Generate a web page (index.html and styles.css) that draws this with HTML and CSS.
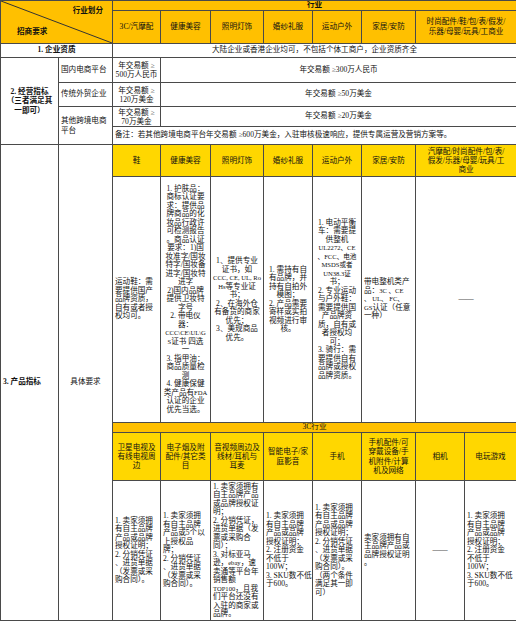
FILE: index.html
```html
<!DOCTYPE html>
<html lang="zh-CN">
<head>
<meta charset="utf-8">
<title>招商要求</title>
<link rel="stylesheet" href="styles.css">
</head>
<body>
<table class="sheet">
<colgroup>
<col class="w58"><col class="w54"><col class="w48"><col class="w50"><col class="w53"><col class="w49"><col class="w49"><col class="w54"><col class="w49"><col class="w52">
</colgroup>
<tbody>
<tr class="r10">
<td class="diag" colspan="2" rowspan="2">
<svg class="diag-line" viewBox="0 0 100 100" preserveAspectRatio="none"><line x1="0" y1="0" x2="100" y2="100"/></svg>
<div class="diag-text"><span class="diag-top">行业划分</span><span class="diag-bot">招商要求</span></div>
</td>
<td class="hbar b" colspan="8">行业</td>
</tr>
<tr class="r33">
<td class="hcat">3C/汽摩配</td>
<td class="hcat">健康美容</td>
<td class="hcat">照明灯饰</td>
<td class="hcat">婚纱礼服</td>
<td class="hcat">运动户外</td>
<td class="hcat">家居/安防</td>
<td class="hcat" colspan="2">时尚配件/鞋/包/表/假发/<br>乐器/母婴/玩具/工商业</td>
</tr>
<tr class="r14">
<td class="b" colspan="2">1. 企业资质</td>
<td colspan="8">大陆企业或香港企业均可，不包括个体工商户，企业资质齐全</td>
</tr>
<tr class="r25">
<td class="b lbl" rowspan="4">2. 经营指标<br>（三者满足其<br>一即可）</td>
<td class="l">国内电商平台</td>
<td class="amt">年交易额 ≥<br>500万人民币</td>
<td colspan="7">年交易额 ≥300万人民币</td>
</tr>
<tr class="r24">
<td class="l">传统外贸企业</td>
<td class="amt">年交易额 ≥<br>120万美金</td>
<td colspan="7">年交易额 ≥50万美金</td>
</tr>
<tr class="r20">
<td class="l lbl" rowspan="2">其他跨境电商<br>平台</td>
<td class="amt">年交易额 ≥<br>70万美金</td>
<td colspan="7">年交易额 ≥20万美金</td>
</tr>
<tr class="r18">
<td class="l" colspan="8">备注：若其他跨境电商平台年交易额 ≥600万美金，入驻审核极速响应，提供专属运营及营销方案等。</td>
</tr>
<tr class="r32">
<td class="b l" rowspan="5">3. 产品指标</td>
<td rowspan="5">具体要求</td>
<td class="pcat">鞋</td>
<td class="pcat">健康美容</td>
<td class="pcat">照明灯饰</td>
<td class="pcat">婚纱礼服</td>
<td class="pcat">运动户外</td>
<td class="pcat">家居/安防</td>
<td class="pcat" colspan="2">汽摩配/时尚配件/包/表/<br>假发/乐器/母婴/玩具/工<br>商业</td>
</tr>
<tr class="r246">
<td class="l">运动鞋：需<br>要提供国产<br>品牌资质，<br>自有或者授<br>权均可。</td>
<td>1. 护肤品：<br>商标认证要<br>求：提供品<br>牌商品的化<br>妆品行政许<br>可检测报告<br>。商品认证<br>要求：1)国<br>妆准字/国妆<br>特字/国妆备<br>进字/国妆特<br>进字<br>2)国内品牌<br>提供卫妆特<br>字号<br>2. 带电仪<br>器：<br><span class="sm">CCC\CE\UL\G</span><br><span class="sm">S</span>证书 四选<br>一<br>3. 指甲油：<br>商品质量检<br>测<br>4. 健康保健<br>类产品有<span class="sm">FDA</span><br>认证的企业<br>优先当选。</td>
<td>1、提供专业<br>证书，如<br><span class="sm">CCC, CE, UL, Ro</span><br><span class="sm">Hs</span>等专业证<br>书；<br>2、在海外仓<br>有备货的商家<br>优先；<br>3、美规商品<br>优先。</td>
<td>1. 需持有自<br>有品牌，并<br>持有自拍外<br>模图；<br>2. 产品需要<br>寄样或实拍<br>视频进行审<br>核。</td>
<td>1. 电动平衡<br>车：需要提<br>供整机<br><span class="sm">UL2272、CE</span><br><span class="sm">、FCC、电池</span><br><span class="sm">MSDS或者</span><br><span class="sm">UN38.3证</span><br>书；<br>2. 专业运动<br>与户外鞋：<br>需要提供国<br>产品牌资<br>质，自有或<br>者授权均<br>可；<br>3. 骑行：需<br>要提供自有<br>品牌或授权<br>品牌资质。</td>
<td class="l">带电整机类产<br>品：<span class="sm">3C 、CE</span><br><span class="sm">、 UL、 FC、</span><br><span class="sm">GS</span>认证（任意<br>一种）</td>
<td colspan="2">——</td>
</tr>
<tr class="r10">
<td class="hbar" colspan="8">3C行业</td>
</tr>
<tr class="r48">
<td class="pcat">卫星电视及<br>有线电视周<br>边</td>
<td class="pcat">电子烟及附<br>配件/其它类<br>目</td>
<td class="pcat">音视频周边及<br>线材/耳机与<br>耳麦</td>
<td class="pcat">智能电子/家<br>庭影音</td>
<td class="pcat">手机</td>
<td class="pcat">手机配件/可<br>穿戴设备/手<br>机附件/计算<br>机及网络</td>
<td class="pcat">相机</td>
<td class="pcat">电玩游戏</td>
</tr>
<tr class="r140">
<td class="l">1. 卖家须拥<br>有自主品牌<br>产品或品牌<br>授权证明；<br>2. 分销凭证<br>、进货单据<br>（发票或采<br>购合同）。</td>
<td class="l">1. 卖家须拥<br>有自主品牌<br>产品或5个以<br>上授权品<br>牌；<br>2. 分销凭证<br>、进货单据<br>（发票或采<br>购合同）。</td>
<td class="l">1. 卖家须拥有<br>自主品牌产品<br>或品牌授权证<br>明；<br>2. 分销凭证，<br>进货单据（发<br>票或采购合<br>同）；<br>3. 对标亚马<br>逊，<span class="sm">ebay</span>，速<br>卖通等平台年<br>销售额<br><span class="sm">TOP100</span>，且我<br>们平台还没有<br>入驻的商家或<br>品牌。</td>
<td class="l">1. 卖家须拥<br>有自主品牌<br>产品或品牌<br>授权证明；<br>2. 注册资金<br>不低于<br>100W；<br>3. SKU数不低<br>于600。</td>
<td class="l">1. 卖家须拥<br>有自主品牌<br>产品或品牌<br>授权证明；<br>2. 分销凭证<br>、进货单据<br>（发票或采<br>购合同）。<br>（两个条件<br>满足其一即<br>可）</td>
<td class="l">卖家须拥有自<br>主品牌产品或<br>品牌授权证明<br>。</td>
<td>——</td>
<td class="l">1. 卖家须拥<br>有自主品牌<br>产品或品牌<br>授权证明；<br>2. 注册资金<br>不低于<br>100W；<br>3. SKU数不低<br>于600。</td>
</tr>
</tbody>
</table>
</body>
</html>
```

FILE: styles.css
```css
html, body {
  margin: 0;
  padding: 0;
  background: #ffffff;
}

body {
  font-family: "Liberation Serif", "Noto Sans CJK SC", serif;
  font-size: 7.6px;
  line-height: 8.5px;
  color: #111111;
}

.sheet {
  border-collapse: collapse;
  table-layout: fixed;
  width: 516px;
}

.w58 { width: 58px; }
.w54 { width: 54px; }
.w48 { width: 48px; }
.w50 { width: 50px; }
.w53 { width: 53px; }
.w49 { width: 49px; }
.w52 { width: 52px; }

.sheet td {
  border: 1px solid #4a4a4a;
  padding: 0 2px;
  text-align: center;
  vertical-align: middle;
  white-space: nowrap;
  overflow: hidden;
  font-family: "Liberation Serif", "Noto Sans CJK SC", serif;
  font-size: 7.6px;
  line-height: 8.5px;
}

.sheet td .sm {
  font-size: 6.6px;
}

.r10 { height: 10px; }
.r14 { height: 14px; }
.r18 { height: 18px; }
.r20 { height: 20px; }
.r24 { height: 24px; }
.r25 { height: 25px; }
.r32 { height: 32px; }
.r33 { height: 33px; }
.r48 { height: 48px; }
.r140 { height: 140px; }
.r246 { height: 246px; }

.sheet td.l { text-align: left; }
.sheet td.b { font-weight: bold; }
.sheet td.lbl { line-height: 9.6px; }
.sheet td.amt { line-height: 9px; }

.sheet td.hbar {
  background: #ffc000;
  line-height: 8.5px;
}

.sheet td.hcat {
  background: #ffc000;
  line-height: 10px;
}

.sheet td.pcat {
  background: #ffd700;
  line-height: 9.2px;
}

.sheet td.diag {
  background: #ffc000;
  position: relative;
  padding: 0;
}

.diag-line {
  position: absolute;
  left: 0;
  top: 0;
  width: 100%;
  height: 100%;
}

.diag-line line {
  stroke: #333333;
  stroke-width: 1;
  vector-effect: non-scaling-stroke;
}

.diag-text {
  display: flex;
  flex-direction: column;
  justify-content: space-between;
  height: 41px;
  box-sizing: border-box;
  padding: 5px 9px 6px 16px;
  font-weight: bold;
}

.diag-top { align-self: flex-end; }
.diag-bot { align-self: flex-start; }
```
